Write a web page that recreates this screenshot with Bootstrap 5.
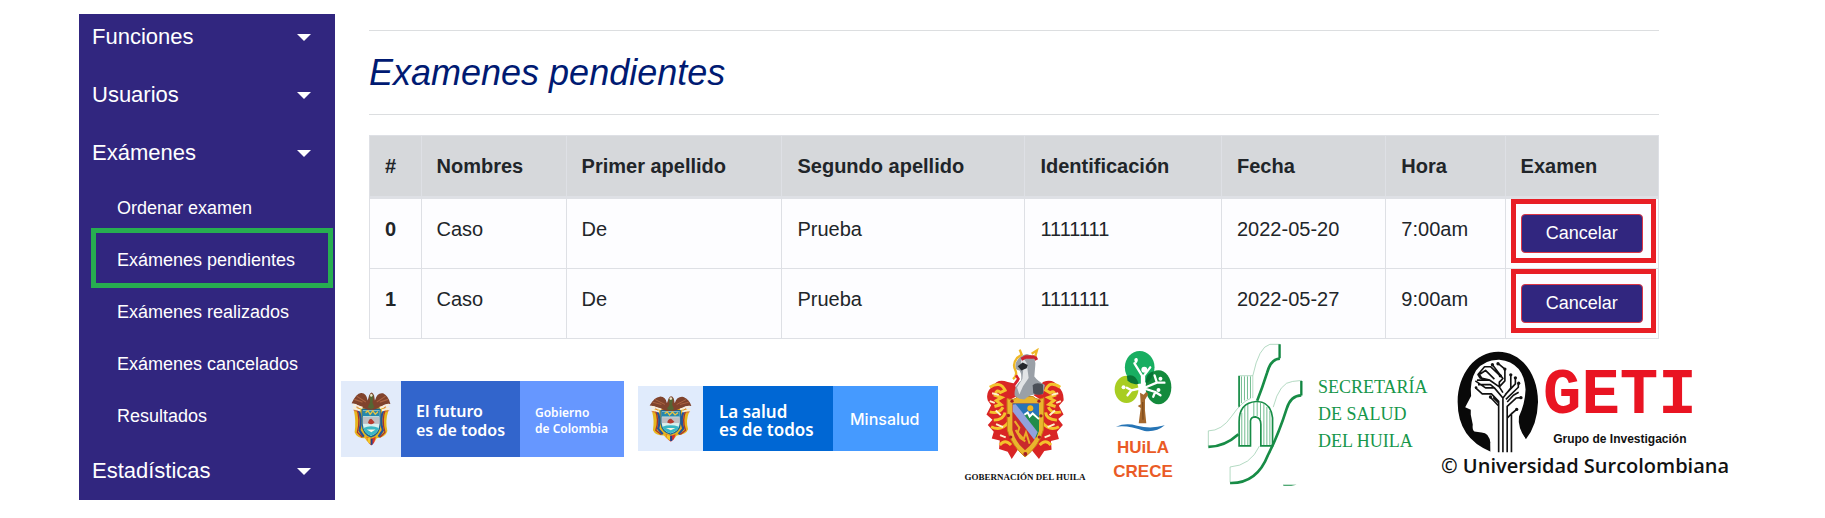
<!DOCTYPE html>
<html lang="es">
<head>
<meta charset="utf-8">
<meta name="viewport" content="width=device-width, initial-scale=1">
<title>Examenes pendientes</title>
<link href="https://cdn.jsdelivr.net/npm/bootstrap@5.3.0/dist/css/bootstrap.min.css" rel="stylesheet">
<style>
  body { font-family: "Liberation Sans", Arial, sans-serif; color: #212529; background: #fff; }
  .page-shell { padding: 14px 100px 16px 79px; gap: 6px; }
  .side-menu { width: 256px; flex: none; background: #31267f; }
  .side-menu a { color: #fff; text-decoration: none; white-space: nowrap; }
  .menu-group { font-size: 22px; line-height: 34px; padding: 12px 24px 12px 13px; }
  .menu-group:first-child { padding-top: 6px; }
  .menu-group::after { content: ""; border: 7px solid transparent; border-top-color: #fff; border-bottom: 0; margin-top: 0; }
  .menu-list { font-size: 18px; line-height: 28px; }
  .menu-list a { display: block; padding: 12px 0 12px 38px; }
  .menu-list li { position: relative; }
  .menu-list .is-marked::after { content: ""; position: absolute; inset: -6px 2px -2px 12px; border: 5px solid #27ae50; pointer-events: none; }
  .content-area { padding: 16px 66px 0 28px; }
  .content-area hr { margin: 0; border-top: 1px solid #dcdee0; opacity: 1; }
  .page-title { color: #001a72; font-size: 36px; line-height: 43px; font-style: italic; font-weight: 400; margin: 20px 0; }
  .exam-table { table-layout: fixed; margin: 20px 0 0; font-size: 20px; line-height: 30px; border-color: #dee0e5; }
  .exam-table > :not(caption) > * > * { padding: 15px; white-space: nowrap; background: #fdfdff; color: #212529; }
  .exam-table > thead > tr > th { background: #d6d8db; border-bottom: 3px solid #dee0e5; }
  .cancel-btn { font-size: 18px; line-height: 25px; padding: 6px 12px; color: #fff; background: #31267f; border: 1px solid #dc3545; border-radius: 4px; }
  .cancel-wrap { position: relative; }
  .cancel-wrap::after { content: ""; position: absolute; inset: -15px -13px -10px -10px; border: 5px solid #e81e25; pointer-events: none; }
  .logo-row { min-height: 145px; margin-top: 3px; white-space: nowrap; }
  .logo-row svg { display: block; }
  .gov-logo { font-family: "Noto Sans", sans-serif; font-weight: 600; color: #fff; margin-top: 8px; }
  .gov-logo > div { display: flex; align-items: center; }
  .gov-a { height: 76px; width: 283px; margin-right: 14px; }
  .gov-b { height: 65px; width: 300px; margin-right: 25px; }
  .gov-a .emblem { width: 60px; background: #e2ebfa; }
  .gov-a .motto { width: 119px; background: #3265cc; padding: 4px 0 0 15px; font-size: 16px; line-height: 19px; }
  .gov-a .entity { background: #6697ff; padding: 4px 0 0 15px; font-size: 12px; line-height: 16px; }
  .gov-b .emblem { width: 65px; background: #e0ebfc; }
  .gov-b .motto { width: 130px; background: #0067d4; padding: 4px 0 0 16px; font-size: 17px; line-height: 18px; }
  .gov-b .entity { background: #459aff; padding-left: 17px; font-family: Inter, sans-serif; font-weight: 500; font-size: 16px; }
  .huila-shield { width: 124px; margin-right: 27px; padding-top: 4px; font: bold 9px/16px "Liberation Serif", serif; color: #111; }
  .huila-crece { width: 58px; margin-right: 35px; padding-top: 4px; color: #ea5b26; font: bold 17px/24px "Liberation Sans", sans-serif; }
  .huila-health { width: 220px; margin-right: 14px; gap: 14px; color: #16964a; font: 18px/27px "Liberation Serif", serif; }
  .geti-brand { width: 283px; color: #111; }
  .geti-name { color: #e91422; font: bold 64px/50px "Liberation Mono", monospace; }
  .geti-group { font: bold 12px/20px "Liberation Sans", sans-serif; }
  .geti-owner { font: 600 20px/26px "Open Sans", sans-serif; }
</style>
</head>
<body>
<svg width="0" height="0" class="position-absolute" aria-hidden="true">
  <symbol id="crest" viewBox="56 102 132 144" preserveAspectRatio="none">
    <path d="M88 140Q66 145 66 155Q73 180 68 210Q75 226 102 226L110 235H134L141 226Q170 224 176 207Q168 180 179 155Q175 143 158 140Z" fill="#e7b51d"/>
    <path d="M80 150Q94 175 84 205L98 222M164 150Q150 175 161 205L147 222" fill="none" stroke="#24539a" stroke-width="7"/>
    <path d="M75 148Q88 178 77 210L93 223M170 148Q156 178 168 210L152 223" fill="none" stroke="#a8322b" stroke-width="4"/>
    <path d="M93 150H152V190Q150 215 122 222Q96 215 93 190Z" fill="#d9efee" stroke="#1b678f" stroke-width="4"/>
    <path d="M95 153H150V168H95Z" fill="#2588ad"/><path d="M95 170H150V188H95Z" fill="#bdbfc4"/>
    <path d="M97 199Q122 190 148 199Q142 214 122 219Q102 214 97 199Z" fill="#39b7c4"/>
    <path d="M108 203H137L123 210Z" fill="#f9f6df"/><path d="M112 186Q115 174 124 175L134 184Q125 193 112 186Z" fill="#b63b2f"/>
    <path d="M104 159L112 154L119 163L128 154L136 163L145 156" stroke="#eac343" stroke-width="4" fill="none"/>
    <path d="M58 134Q73 108 89 107Q107 106 111 127L116 113Q124 99 132 113L135 127Q142 105 162 108Q180 115 186 136Q170 133 158 142L133 151H111L87 143Q72 134 58 134Z" fill="#80432d"/>
    <path d="M67 124L94 131M75 116L105 131M178 124L151 131M170 116L141 131" stroke="#aa6342" stroke-width="3"/>
    <path d="M63 138L94 146M62 146L87 153M181 138L151 146M183 147L158 153" stroke="#f9eed9" stroke-width="6"/>
    <path d="M64 152L78 156M182 153L167 157M75 142L82 148M170 142L164 148" stroke="#cd5545" stroke-width="2"/>
    <path d="M117 115Q124 104 130 115L127 132L133 145L123 150L111 145L119 132Z" fill="#546634"/>
    <circle cx="123" cy="113" r="4" fill="#eee2c8"/>
    <path d="M107 222L123 227L138 222L132 238L123 245L114 238Z" fill="#d73331"/><path d="M109 224L121 226V242L113 237Z" fill="#f3ca28"/><path d="M121 227H127V243H121Z" fill="#20458b"/>
  </symbol>
</svg>

<div class="page-shell d-flex align-items-start">
  <nav class="side-menu" aria-label="Menú principal">
    <a class="menu-group dropdown-toggle d-flex justify-content-between align-items-center" href="#">Funciones</a>
    <a class="menu-group dropdown-toggle d-flex justify-content-between align-items-center" href="#">Usuarios</a>
    <a class="menu-group dropdown-toggle d-flex justify-content-between align-items-center" href="#">Exámenes</a>
    <ul class="menu-list list-unstyled mb-0">
      <li><a href="#">Ordenar examen</a></li>
      <li class="is-marked"><a href="#">Exámenes pendientes</a></li>
      <li><a href="#">Exámenes realizados</a></li>
      <li><a href="#">Exámenes cancelados</a></li>
      <li><a href="#">Resultados</a></li>
    </ul>
    <a class="menu-group dropdown-toggle d-flex justify-content-between align-items-center" href="#">Estadísticas</a>
  </nav>

  <div class="flex-grow-1">
    <main class="content-area">
      <hr>
      <h1 class="page-title">Examenes pendientes</h1>
      <hr>
      <table class="table table-bordered exam-table">
        <colgroup>
          <col style="width:4%"><col style="width:11.25%"><col style="width:16.75%"><col style="width:18.85%">
          <col style="width:15.25%"><col style="width:12.75%"><col style="width:9.25%"><col style="width:11.9%">
        </colgroup>
        <thead>
          <tr><th scope="col">#</th><th scope="col">Nombres</th><th scope="col">Primer apellido</th><th scope="col">Segundo apellido</th><th scope="col">Identificación</th><th scope="col">Fecha</th><th scope="col">Hora</th><th scope="col">Examen</th></tr>
        </thead>
        <tbody>
          <tr><th scope="row">0</th><td>Caso</td><td>De</td><td>Prueba</td><td>1111111</td><td>2022-05-20</td><td>7:00am</td><td><div class="cancel-wrap"><button type="button" class="btn cancel-btn d-block w-100">Cancelar</button></div></td></tr>
          <tr><th scope="row">1</th><td>Caso</td><td>De</td><td>Prueba</td><td>1111111</td><td>2022-05-27</td><td>9:00am</td><td><div class="cancel-wrap"><button type="button" class="btn cancel-btn d-block w-100">Cancelar</button></div></td></tr>
        </tbody>
      </table>
    </main>

    <footer class="logo-row d-flex align-items-center">
      <div class="gov-logo gov-a d-flex flex-shrink-0">
        <div class="emblem justify-content-center"><svg width="40" height="55"><use href="#crest"/></svg></div>
        <div class="motto">El futuro<br>es de todos</div>
        <div class="entity flex-grow-1">Gobierno<br>de Colombia</div>
      </div>
      <div class="gov-logo gov-b d-flex flex-shrink-0">
        <div class="emblem justify-content-center"><svg width="43" height="47"><use href="#crest"/></svg></div>
        <div class="motto">La salud<br>es de todos</div>
        <div class="entity flex-grow-1">Minsalud</div>
      </div>
      <div class="huila-shield d-flex flex-column align-items-center flex-shrink-0">
        <svg width="80" height="113" viewBox="105 38 238 340" class="mb-2" aria-hidden="true">
          <path d="M172 140Q140 128 127 154Q104 170 112 196L122 210L108 238L126 254L112 270L130 290L124 310L148 316L146 342L172 350L184 372L202 345L180 250L176 195L205 180L192 145ZM278 140Q310 130 321 152Q342 168 340 196L326 212L340 238L324 252L338 270L320 290L326 312L302 318L304 344L282 348L266 372L244 345L270 250L274 195L250 180Z" fill="#d92525"/>
          <path d="M118 156Q150 136 164 165L150 172Q138 160 134 180L154 187L138 196L152 208L132 214M118 230Q145 238 158 216M130 255Q160 254 164 232M122 275Q152 290 174 262M148 330Q164 310 182 330M330 156Q298 134 286 165L300 173Q312 164 314 180L294 187L311 196L296 208L316 214M332 230Q305 238 294 216M320 255Q288 254 286 232M326 275Q298 290 276 262M302 330Q286 310 268 330" fill="none" stroke="#f4c32c" stroke-width="9"/>
          <path d="M125 174L145 179M118 198L133 203M136 226L151 240M137 267L158 276M149 300L166 307M324 174L304 179M332 198L318 203M314 226L298 240M313 267L292 276M300 300L283 307" stroke="#fff3cd" stroke-width="6"/>
          <path d="M170 190Q190 198 202 184H248Q262 198 281 188L279 285Q266 334 224 366Q183 330 171 285Z" fill="#eab52d" stroke="#c98816" stroke-width="3"/>
          <path d="M186 205H266V285Q254 322 224 346Q194 322 186 285Z" fill="#c92a2c"/>
          <path d="M186 205H266V285L258 306Z" fill="#2874b8"/>
          <path d="M221 238L231 231L238 241L247 232L266 244V287L258 308Z" fill="#218c4a"/>
          <path d="M222 239L232 232L238 244L247 235L266 252" stroke="#fff" stroke-width="6" fill="none"/>
          <path d="M187 209L196 207L262 291L252 314L187 229Z" fill="#91a1dc"/>
          <circle cx="240" cy="219" r="9" fill="#f6b71b"/><path d="M193 258L207 278L202 292L220 312L227 292L238 326M196 285L210 309L225 319" fill="none" stroke="#eaae28" stroke-width="6"/>
          <g fill="#a51e24"><circle cx="174" cy="241" r="5"/><circle cx="272" cy="242" r="5"/><circle cx="181" cy="306" r="5"/><circle cx="267" cy="306" r="5"/><circle cx="225" cy="357" r="6"/><circle cx="185" cy="198" r="5"/><circle cx="266" cy="198" r="5"/></g>
          <path d="M193 182Q190 153 212 136Q215 118 208 106Q190 105 197 82Q206 60 230 56Q258 62 255 90L252 124Q263 139 284 149L278 177Q243 174 222 193Q203 193 193 182Z" fill="#9aa0a7"/>
          <path d="M218 66Q204 84 219 100L216 131L200 157L207 178L218 153L235 128L229 84Z" fill="#e2e4e6"/>
          <path d="M202 93L217 82L232 89L229 99L213 106Z" fill="#24272c"/><path d="M247 150Q258 139 278 148L279 175Q264 183 249 174Z" fill="#4b5058"/>
          <path d="M213 72L226 65H254L259 74" stroke="#cb2532" stroke-width="10" fill="none"/><path d="M208 43L214 58L200 68Q185 86 195 105Q202 120 188 132M244 55L260 45L255 63" fill="none" stroke="#efb827" stroke-width="7"/><path d="M197 120L204 131L188 154L203 134" fill="none" stroke="#d82230" stroke-width="8"/>
        </svg>
        <span>GOBERNACIÓN DEL HUILA</span>
      </div>
      <div class="huila-crece d-flex flex-column align-items-center flex-shrink-0">
        <svg width="58" height="82" viewBox="72 44 176 246" preserveAspectRatio="none" aria-hidden="true">
          <ellipse cx="110" cy="162" rx="36" ry="41" fill="#a8cd22"/><ellipse cx="207" cy="156" rx="39" ry="51" fill="#138a3c"/><ellipse cx="150" cy="96" rx="45" ry="49" fill="#18ae61"/>
          <path d="M111 122Q136 113 147 145Q130 151 113 136ZM168 140Q170 112 193 108Q190 132 170 145Z" fill="#087436"/>
          <path d="M134 84L157 121V158L125 165L111 157L125 165L113 180M182 96L163 121V158L202 142L195 120M202 142L225 142M163 159L197 170L213 180M197 170L191 184" fill="none" stroke="#fff" stroke-width="7" stroke-linecap="round" stroke-linejoin="round"/>
          <g fill="#fff"><circle cx="164" cy="103" r="9"/><circle cx="101" cy="156" r="6"/><circle cx="213" cy="130" r="6"/><circle cx="207" cy="164" r="6"/></g>
          <path d="M134 77Q132 67 142 68Q148 75 138 86Z" fill="#fff"/>
          <path d="M151 172L162 178L170 169L176 177L166 193V225L170 264H147L153 218L144 212L153 207Z" fill="#a5682d"/><path d="M159 200L160 253" stroke="#7f4b1c" stroke-width="4"/>
          <path d="M78 274Q108 261 142 271Q184 282 226 270Q201 291 165 287Q113 268 78 274Z" fill="#2674b5"/>
        </svg>
        <span class="mt-1">HUiLA</span><span>CRECE</span>
      </div>
      <div class="huila-health d-flex align-items-center flex-shrink-0">
        <svg width="97" height="145" viewBox="50 24 290 434" preserveAspectRatio="none" class="flex-shrink-0" aria-hidden="true">
          <g fill="none" stroke="#8fc7a5" stroke-width="2"><path d="M187 125Q205 38 238 31H268M54 337V290Q94 290 124 246T180 193M119 444V398Q180 394 207 335M248 219Q267 144 306 142L334 139M144 125H187V192M145 221V125"/></g>
          <path d="M267 31V73M332 141V184" stroke="#118641" stroke-width="7"/>
          <path d="M268 74Q241 75 230 115Q215 162 200 200M54 338Q103 337 144 300M119 446Q199 448 232 363Q264 300 288 224Q301 184 332 184" fill="none" stroke="#178c46" stroke-width="8"/>
          <path d="M146 218V126M146 335H180V260Q181 248 195 248Q211 251 211 270V335H246V251Q240 201 197 202Q146 206 146 262Z" fill="none" stroke="#178c46" stroke-width="5"/>
          <path d="M153 127V207M162 127V199M171 127V195M180 127V192M154 236V333M163 217V333M172 210V333M190 204V246M200 204V246M210 206V255M220 210V333M229 218V333M238 230V333" stroke="#2b9b58" stroke-width="2"/>
          <path d="M277 451H318L302 454H279Z" fill="#178c46"/>
        </svg>
        <span>SECRETARÍA<br>DE SALUD<br>DEL HUILA</span>
      </div>
      <div class="geti-brand flex-shrink-0">
        <div class="d-flex align-items-start">
          <svg width="82" height="102" viewBox="76 50 250 304" preserveAspectRatio="none" class="flex-shrink-0 ms-3" aria-hidden="true">
            <path d="M179 350Q78 310 78 202C78 118 132 52 202 52S323 118 323 202Q321 270 286 313L262 282L178 325Z" fill="#090909"/>
            <path d="M178 354V325Q174 293 151 293L129 290Q122 286 124 269L118 240V225L101 218L119 184Q114 140 134 108Q159 75 205 76Q280 84 285 165Q283 210 265 245Q260 277 286 313V354Z" fill="#fff"/>
            <g fill="none" stroke="#111" stroke-width="5" stroke-linejoin="round">
              <path d="M203 352V200L181 178H153L132 159M216 352V190L190 160H163L132 139M229 352V215L257 190L271 189M242 352V237L258 224M216 190L240 160V121M223 180L254 148V130M225 194L263 158V146M216 174L205 157L176 137H137M205 157L222 139V104L201 87M205 157V143L216 132L184 91M203 205L186 188M190 160L178 150H140M176 137L146 130L140 120L160 97H179L208 124M152 132L144 120L163 108L190 134M229 202L248 182L264 173M242 237L229 250M203 214L177 187"/>
            </g>
            <g fill="#111"><circle cx="201" cy="88" r="5"/><circle cx="184" cy="91" r="5"/><circle cx="222" cy="104" r="5"/><circle cx="208" cy="124" r="5"/><circle cx="240" cy="121" r="5"/><circle cx="254" cy="130" r="5"/><circle cx="264" cy="146" r="5"/><circle cx="271" cy="189" r="5"/><circle cx="258" cy="224" r="5"/><circle cx="178" cy="187" r="5"/><circle cx="134" cy="159" r="4"/></g>
          </svg>
          <div class="d-flex flex-column align-items-center pt-3 ps-1 mt-1">
            <span class="geti-name">GETI</span>
            <span class="geti-group mt-2">Grupo de Investigación</span>
          </div>
        </div>
        <div class="geti-owner">© Universidad Surcolombiana</div>
      </div>
    </footer>
  </div>
</div>
<script src="https://cdn.jsdelivr.net/npm/bootstrap@5.3.0/dist/js/bootstrap.bundle.min.js"></script>
</body>
</html>
